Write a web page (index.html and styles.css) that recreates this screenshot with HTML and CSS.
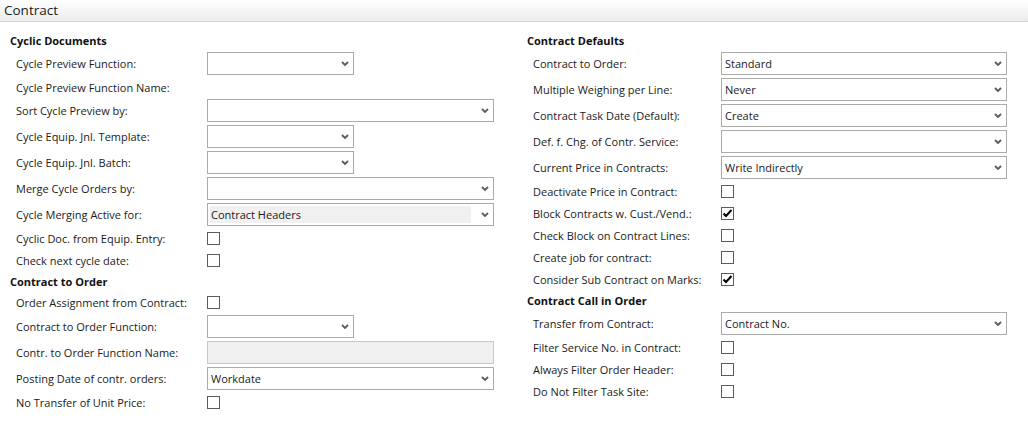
FILE: index.html
```html
<!DOCTYPE html>
<html>
<head>
<meta charset="utf-8">
<link rel="stylesheet" href="styles.css">
</head>
<body>
<div class="titlebar">Contract</div>
<div class="page">
  <div class="col col-left">
    <div class="heading">Cyclic Documents</div>
    <div class="row"><span class="label">Cycle Preview Function:</span><div class="select narrow"><span class="value"></span><svg class="chev" width="8" height="6" viewBox="0 0 8 6"><polyline points="1,1 4,4 7,1" /></svg></div></div>
    <div class="row text"><span class="label">Cycle Preview Function Name:</span></div>
    <div class="row"><span class="label">Sort Cycle Preview by:</span><div class="select wide"><span class="value"></span><svg class="chev" width="8" height="6" viewBox="0 0 8 6"><polyline points="1,1 4,4 7,1" /></svg></div></div>
    <div class="row"><span class="label">Cycle Equip. Jnl. Template:</span><div class="select narrow"><span class="value"></span><svg class="chev" width="8" height="6" viewBox="0 0 8 6"><polyline points="1,1 4,4 7,1" /></svg></div></div>
    <div class="row"><span class="label">Cycle Equip. Jnl. Batch:</span><div class="select narrow"><span class="value"></span><svg class="chev" width="8" height="6" viewBox="0 0 8 6"><polyline points="1,1 4,4 7,1" /></svg></div></div>
    <div class="row"><span class="label">Merge Cycle Orders by:</span><div class="select wide"><span class="value"></span><svg class="chev" width="8" height="6" viewBox="0 0 8 6"><polyline points="1,1 4,4 7,1" /></svg></div></div>
    <div class="row"><span class="label">Cycle Merging Active for:</span><div class="select wide"><span class="value shaded">Contract Headers</span><svg class="chev" width="8" height="6" viewBox="0 0 8 6"><polyline points="1,1 4,4 7,1" /></svg></div></div>
    <div class="row check"><span class="label">Cyclic Doc. from Equip. Entry:</span><span class="box"></span></div>
    <div class="row check"><span class="label">Check next cycle date:</span><span class="box"></span></div>
    <div class="heading">Contract to Order</div>
    <div class="row check"><span class="label">Order Assignment from Contract:</span><span class="box"></span></div>
    <div class="row"><span class="label">Contract to Order Function:</span><div class="select narrow"><span class="value"></span><svg class="chev" width="8" height="6" viewBox="0 0 8 6"><polyline points="1,1 4,4 7,1" /></svg></div></div>
    <div class="row"><span class="label">Contr. to Order Function Name:</span><div class="input wide disabled"></div></div>
    <div class="row"><span class="label">Posting Date of contr. orders:</span><div class="select wide"><span class="value">Workdate</span><svg class="chev" width="8" height="6" viewBox="0 0 8 6"><polyline points="1,1 4,4 7,1" /></svg></div></div>
    <div class="row check"><span class="label">No Transfer of Unit Price:</span><span class="box"></span></div>
  </div>
  <div class="col col-right">
    <div class="heading">Contract Defaults</div>
    <div class="row"><span class="label">Contract to Order:</span><div class="select wide"><span class="value">Standard</span><svg class="chev" width="8" height="6" viewBox="0 0 8 6"><polyline points="1,1 4,4 7,1" /></svg></div></div>
    <div class="row"><span class="label">Multiple Weighing per Line:</span><div class="select wide"><span class="value">Never</span><svg class="chev" width="8" height="6" viewBox="0 0 8 6"><polyline points="1,1 4,4 7,1" /></svg></div></div>
    <div class="row"><span class="label">Contract Task Date (Default):</span><div class="select wide"><span class="value">Create</span><svg class="chev" width="8" height="6" viewBox="0 0 8 6"><polyline points="1,1 4,4 7,1" /></svg></div></div>
    <div class="row"><span class="label">Def. f. Chg. of Contr. Service:</span><div class="select wide"><span class="value"></span><svg class="chev" width="8" height="6" viewBox="0 0 8 6"><polyline points="1,1 4,4 7,1" /></svg></div></div>
    <div class="row"><span class="label">Current Price in Contracts:</span><div class="select wide"><span class="value">Write Indirectly</span><svg class="chev" width="8" height="6" viewBox="0 0 8 6"><polyline points="1,1 4,4 7,1" /></svg></div></div>
    <div class="row check"><span class="label">Deactivate Price in Contract:</span><span class="box"></span></div>
    <div class="row check"><span class="label">Block Contracts w. Cust./Vend.:</span><span class="box"><svg width="11" height="11" viewBox="0 0 11 11"><polyline class="tick" points="1.5,5.5 4,8 9.5,2" /></svg></span></div>
    <div class="row check"><span class="label">Check Block on Contract Lines:</span><span class="box"></span></div>
    <div class="row check"><span class="label">Create job for contract:</span><span class="box"></span></div>
    <div class="row check"><span class="label">Consider Sub Contract on Marks:</span><span class="box"><svg width="11" height="11" viewBox="0 0 11 11"><polyline class="tick" points="1.5,5.5 4,8 9.5,2" /></svg></span></div>
    <div class="heading">Contract Call in Order</div>
    <div class="row"><span class="label">Transfer from Contract:</span><div class="select wide"><span class="value">Contract No.</span><svg class="chev" width="8" height="6" viewBox="0 0 8 6"><polyline points="1,1 4,4 7,1" /></svg></div></div>
    <div class="row check"><span class="label">Filter Service No. in Contract:</span><span class="box"></span></div>
    <div class="row check"><span class="label">Always Filter Order Header:</span><span class="box"></span></div>
    <div class="row check"><span class="label">Do Not Filter Task Site:</span><span class="box"></span></div>
  </div>
</div>
</body>
</html>
```

FILE: styles.css
```css
* { box-sizing: border-box; }
html, body { margin: 0; padding: 0; background: #ffffff; }
body {
  font-family: "Open Sans", "Noto Sans", "Liberation Sans", sans-serif;
  font-size: 11px;
  color: #1a1a1a;
  width: 1028px;
  height: 427px;
  overflow: hidden;
}
.titlebar {
  height: 22px;
  background: linear-gradient(#ffffff, #ececec);
  border-bottom: 1px solid #d4d4d4;
  font-size: 13.5px;
  line-height: 20px;
  padding-left: 4px;
  color: #1b1b1b;
}
.page {
  display: flex;
  padding-top: 7px;
}
.col { display: flex; flex-direction: column; }
.col-left { width: 517px; padding-left: 10px; }
.col-right { padding-left: 10px; }
.heading {
  height: 20px;
  padding-top: 4px;
  line-height: 16px;
  font-weight: 700;
  color: #111;
}
.row {
  display: flex;
  align-items: center;
  margin-top: 3px;
  height: 23px;
  padding-left: 6px;
}
.row.text { height: 18px; }
.row.check { height: 19px; }
.label { flex: none; white-space: nowrap; }
.col-left .label { width: 191px; }
.col-right .label { width: 188px; }
.select, .input {
  height: 23px;
  border: 1px solid #ababab;
  display: flex;
  align-items: center;
  background: #fff;
  padding: 2px 0 2px 2px;
}
.narrow { width: 147px; }
.col-left .wide { width: 287px; }
.col-right .wide { width: 286px; }
.value {
  flex: 1;
  height: 17px;
  line-height: 17px;
  padding-left: 1px;
  white-space: nowrap;
}
.value.shaded { background: #f0f0f0; margin-right: 10px; }
.chev {
  flex: none;
  margin-left: auto;
  margin-right: 4px;
}
.chev polyline { fill: none; stroke: #5a5a5a; stroke-width: 1.8; }
.input.disabled { background: #f0f0f0; border-color: #c8c8c8; }
.box {
  width: 13px;
  height: 13px;
  border: 1px solid #5c5c5c;
  background: #fff;
  display: flex;
  align-items: center;
  justify-content: center;
  flex: none;
}
.tick { fill: none; stroke: #000; stroke-width: 2; }
```
